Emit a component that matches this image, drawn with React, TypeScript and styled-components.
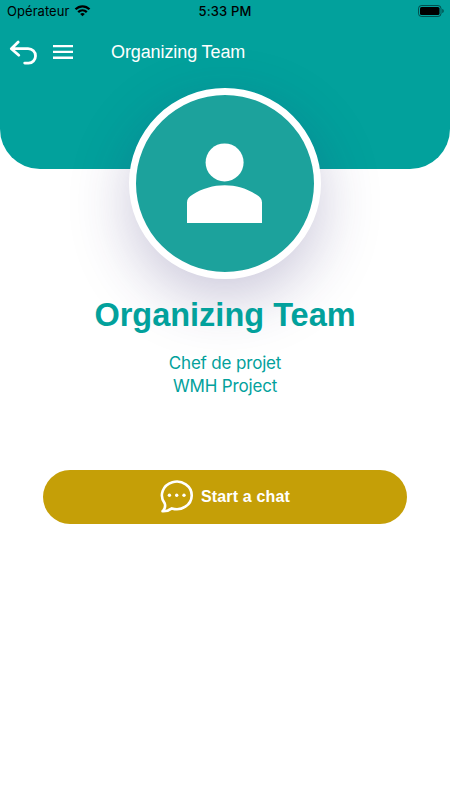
import React from "react";
import styled, { createGlobalStyle } from "styled-components";

const GlobalStyle = createGlobalStyle`
  * { box-sizing: border-box; }
  body { margin: 0; background: #fff; }
`;

const Screen = styled.main`
  display: flex;
  flex-direction: column;
  align-items: center;
  width: 450px;
  height: 800px;
  overflow: hidden;
  background: #fff;
  font-family: "Liberation Sans", Arial, sans-serif;
`;

const Header = styled.header`
  width: 100%;
  height: 169.4px;
  flex: none;
  border-radius: 0 0 40px 40px;
  background: #02a19c;
`;

const StatusBar = styled.div`
  display: grid;
  grid-template-columns: 1fr auto 1fr;
  align-items: center;
  height: 22px;
  padding: 0 6px 0 7px;
  color: #000;
  font-family: Inter, sans-serif;
  font-size: 13px;
  line-height: 22px;
`;

const Carrier = styled.div`
  display: flex;
  align-items: center;
  gap: 4.5px;
  letter-spacing: 0.05px;
`;

const Clock = styled.div`
  margin-left: -1px;
  font-weight: 500;
  letter-spacing: 0.15px;
`;

const BatteryIcon = styled.svg`
  justify-self: end;
`;

const NavBar = styled.nav`
  display: flex;
  align-items: center;
  height: 60px;
  padding-left: 9px;
`;

const IconButton = styled.button<{ $gap: number }>`
  display: flex;
  margin: 0 ${(p) => p.$gap}px 0 0;
  padding: 0;
  border: 0;
  background: none;
  color: #fff;
`;

const NavTitle = styled.span`
  color: #fff;
  font-size: 18px;
  line-height: 24px;
  letter-spacing: -0.1px;
  white-space: nowrap;
`;

const Avatar = styled.div`
  position: relative;
  flex: none;
  width: 192px;
  height: 191px;
  margin-top: -81.4px;
  border: 7px solid #fff;
  border-radius: 50%;
  background: #1ca29c;
  box-shadow: 0 20px 60px rgba(51, 38, 112, 0.26);
`;

const Name = styled.h1`
  position: relative;
  margin: 16px 0 0;
  color: #02a19c;
  font-size: 32.5px;
  line-height: 40px;
  white-space: nowrap;
`;

const Role = styled.p`
  margin: 17px 0 0;
  color: #02a19c;
  font-family: Inter, sans-serif;
  font-size: 17px;
  font-weight: 400;
  line-height: 23px;
  letter-spacing: -0.17px;
  text-align: center;
`;

const ChatButton = styled.button`
  display: flex;
  align-items: center;
  justify-content: center;
  gap: 7px;
  width: 363.5px;
  height: 54px;
  margin-top: 72px;
  padding: 0;
  border: 0;
  border-radius: 27px;
  background: #c59f07;
  color: #fff;
  font-family: inherit;
  font-size: 16px;
  font-weight: 700;
  letter-spacing: 0.15px;
`;

export default function App() {
  return (
    <Screen>
      <GlobalStyle />
      <Header>
        <StatusBar>
          <Carrier>
            Opérateur
            <svg width="17" height="12" viewBox="0 0 16 12" fill="none" stroke="#000" strokeWidth="2.3">
              <path d="M1 4.3C5 .3 11 .3 15 4.3M3.7 7.1c2.5-2.4 6.1-2.4 8.6 0" />
              <path d="M8 11.3 5.7 9c1.3-1.2 3.3-1.2 4.6 0z" fill="#000" stroke="none" />
            </svg>
          </Carrier>
          <Clock>5:33 PM</Clock>
          <BatteryIcon width="26" height="12" viewBox="0 0 26 12">
            <rect x=".5" y=".5" width="22.5" height="11" rx="3" fill="none" stroke="#000" strokeOpacity=".5" />
            <rect x="2" y="2" width="19.5" height="8" rx="1.6" />
            <path d="M24.4 4v4c1.7-.7 1.7-3.3 0-4z" opacity=".6" />
          </BatteryIcon>
        </StatusBar>
        <NavBar>
          <IconButton aria-label="Back" $gap={16}>
            <svg width="28" height="26" viewBox="0 0 28 26" fill="none" stroke="currentColor" strokeWidth="2.8" strokeLinecap="round" strokeLinejoin="round">
              <path d="M9.2 3.1 2.3 9.7l7.5 6.5M2.6 9.7h16.4c4.4 0 7.5 3.2 7.5 7.2s-3 7.2-7 7.2h-3.8" />
            </svg>
          </IconButton>
          <IconButton aria-label="Menu" $gap={38}>
            <svg width="20" height="14" viewBox="0 0 20 14" fill="currentColor">
              <path d="M0 0h20v2.3H0zM0 5.8h20v2.3H0zM0 11.6h20v2.3H0z" />
            </svg>
          </IconButton>
          <NavTitle>Organizing Team</NavTitle>
        </NavBar>
      </Header>
      <Avatar>
        <svg width="177" height="177" viewBox="0 0 177 177" fill="#fff">
          <circle cx="88.6" cy="67.4" r="19" />
          <path d="M51 128v-20.5c0-3.4 2.2-5.8 5.4-7.7 19.5-12.7 45.2-12.7 64.2 0 3.2 1.9 5.4 4.3 5.4 7.7V128z" />
        </svg>
      </Avatar>
      <Name>Organizing Team</Name>
      <Role>
        Chef de projet
        <br />
        WMH Project
      </Role>
      <ChatButton>
        <svg width="34" height="34" viewBox="0 0 34 34" fill="none" stroke="currentColor" strokeWidth="2.6" strokeLinejoin="round">
          <path d="M4.7 23.4A14.9 13.8 0 1 1 11.9 28.4c-2.6 2-5.8 3.1-9.4 2.9C4.9 29 5.7 26.4 4.7 23.4z" />
          <g fill="currentColor" stroke="none">
            <circle cx="9.4" cy="15.3" r="1.7" />
            <circle cx="16.7" cy="15.3" r="1.7" />
            <circle cx="24" cy="15.3" r="1.7" />
          </g>
        </svg>
        Start a chat
      </ChatButton>
    </Screen>
  );
}
